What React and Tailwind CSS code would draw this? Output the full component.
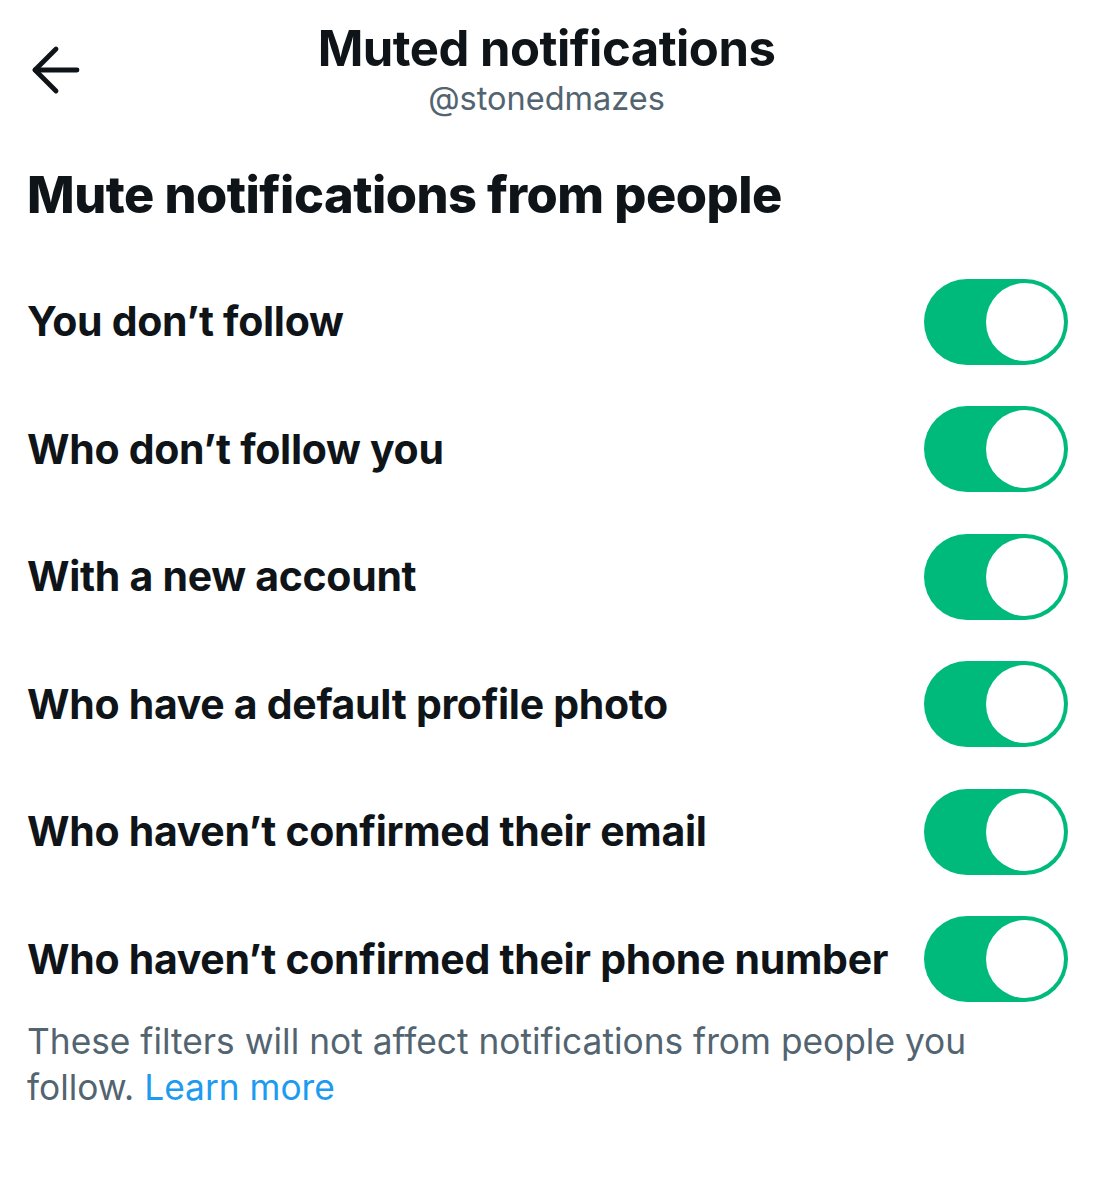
import { ArrowLeft } from 'lucide-react'

const filters = [
  'You don’t follow',
  'Who don’t follow you',
  'With a new account',
  'Who have a default profile photo',
  'Who haven’t confirmed their email',
  'Who haven’t confirmed their phone number',
]

const Toggle = () => (
  <div className="w-[144px] h-[86px] rounded-full bg-[#00ba7c] flex items-center justify-end pr-[4px] shrink-0">
    <div className="w-[78px] h-[78px] rounded-full bg-white" />
  </div>
)

export default function App() {
  return (
    <div className="w-[1093px] h-[1200px] bg-white text-[#0f1419]" style={{ fontFamily: 'Inter, "Liberation Sans", sans-serif' }}>
      {/* header */}
      <div className="grid grid-cols-[120px_1fr_120px] items-start pt-[20px]">
        <div className="pl-[20px] pt-[14px]">
          <ArrowLeft className="w-[72px] h-[72px]" strokeWidth={1.6} />
        </div>
        <div className="flex flex-col items-center">
          <h1 className="text-[49px] leading-[58px] font-bold tracking-[-0.5px]">Muted notifications</h1>
          <p className="text-[32.5px] leading-[40px] text-[#536471] mt-[1px]">@stonedmazes</p>
        </div>
        <div />
      </div>

      <h2 className="px-[27px] mt-[46px] text-[50.5px] leading-[60px] font-extrabold tracking-[-0.5px]">
        Mute notifications from people
      </h2>

      <div className="px-[25px] pl-[27px] mt-[33px] flex flex-col">
        {filters.map((f) => (
          <div key={f} className="h-[127.5px] flex items-center justify-between">
            <span className="text-[41px] font-bold tracking-[-0.3px]">{f}</span>
            <Toggle />
          </div>
        ))}
      </div>

      <p className="px-[27px] pr-[100px] mt-[-4px] text-[35.3px] leading-[46px] text-[#536471]">
        These filters will not affect notifications from people you follow.{' '}
        <span className="text-[#1d9bf0]">Learn more</span>
      </p>
    </div>
  )
}
